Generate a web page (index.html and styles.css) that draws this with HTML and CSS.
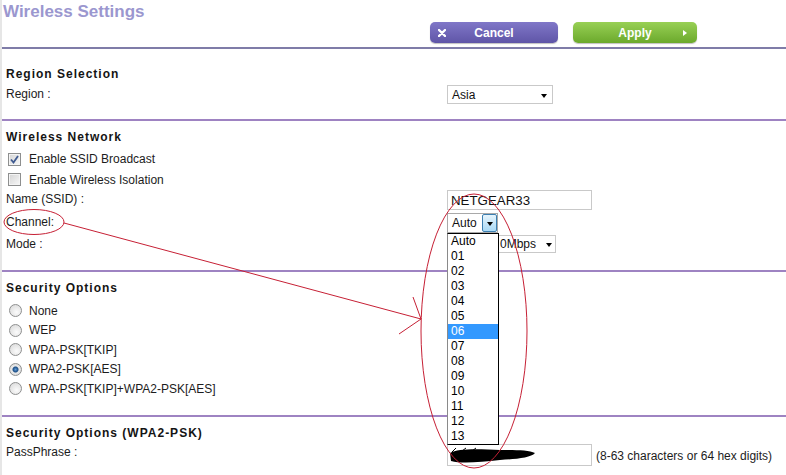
FILE: index.html
```html
<!DOCTYPE html>
<html lang="en">
<head>
    <meta charset="utf-8">
    <title>Wireless Settings</title>
    <link rel="stylesheet" href="styles.css">
</head>
<body>
    <div class="page">
        <header class="topbar">
            <h1 class="title">Wireless Settings</h1>
            <div class="actions">
                <span class="btn btn-cancel">
                    <svg class="btn-x" width="8" height="8" viewBox="0 0 8 8"><path d="M1 1 L7 7 M7 1 L1 7" stroke="#fff" stroke-width="2.4" stroke-linecap="round"/></svg>
                    <span class="btn-text">Cancel</span>
                    <span></span>
                </span>
                <span class="btn btn-apply">
                    <span></span>
                    <span class="btn-text">Apply</span>
                    <span class="btn-arrow"></span>
                </span>
            </div>
        </header>

        <section class="block block-region">
            <h2 class="block-title">Region Selection</h2>
            <div class="field field-region">
                <span class="label">Region :</span>
                <span class="select select-region">Asia<span class="caret"></span></span>
            </div>
        </section>

        <section class="block block-wireless">
            <h2 class="block-title">Wireless Network</h2>
            <div class="check-list">
                <div class="check-row"><span class="checkbox checked"><svg width="9" height="9" viewBox="0 0 9 9"><path d="M1 4.5 L3.5 7.5 L8 1" fill="none" stroke="#3f5a90" stroke-width="1.8"/></svg></span>Enable SSID Broadcast</div>
                <div class="check-row"><span class="checkbox"></span>Enable Wireless Isolation</div>
            </div>
            <div class="field field-name">
                <span class="label">Name (SSID) :</span>
                <span class="textbox">NETGEAR33</span>
            </div>
            <div class="field field-channel">
                <span class="label">Channel:</span>
                <span class="select select-channel">Auto<span class="drop-btn"><span class="caret"></span></span></span>
            </div>
            <div class="field field-mode">
                <span class="label">Mode :</span>
                <span class="select select-mode"><span class="select-value">0Mbps</span><span class="caret"></span></span>
            </div>
        </section>

        <section class="block block-security">
            <h2 class="block-title">Security Options</h2>
            <div class="radio-list">
                <div class="radio-row"><span class="radio"></span>None</div>
                <div class="radio-row"><span class="radio"></span>WEP</div>
                <div class="radio-row"><span class="radio"></span>WPA-PSK[TKIP]</div>
                <div class="radio-row"><span class="radio checked"></span>WPA2-PSK[AES]</div>
                <div class="radio-row"><span class="radio"></span>WPA-PSK[TKIP]+WPA2-PSK[AES]</div>
            </div>
        </section>

        <section class="block block-pass">
            <h2 class="block-title">Security Options (WPA2-PSK)</h2>
            <div class="field field-pass">
                <span class="label">PassPhrase :</span>
                <span class="textbox textbox-pass"></span>
                <span class="hint">(8-63 characters or 64 hex digits)</span>
            </div>
        </section>

        <!-- open channel list -->
        <ul class="dropdown">
            <li>Auto</li>
            <li>01</li>
            <li>02</li>
            <li>03</li>
            <li>04</li>
            <li>05</li>
            <li class="active">06</li>
            <li>07</li>
            <li>08</li>
            <li>09</li>
            <li>10</li>
            <li>11</li>
            <li>12</li>
            <li>13</li>
        </ul>

        <!-- hand drawn marks on the screenshot -->
        <svg class="marks" width="786" height="475" viewBox="0 0 786 475">
            <path d="M450 453 C 458 448, 480 449, 500 450 C 515 450, 529 450, 535 453 C 531 458, 515 459, 500 460 C 480 462, 462 464, 451 461 Z" fill="#000"/>
            <path d="M452 452 L 456 448 M 462 451 L 466 448 M 472 451 L 476 448" stroke="#000" stroke-width="1"/>
            <ellipse cx="34" cy="222" rx="30" ry="12.5" fill="none" stroke="#c62035" stroke-width="1"/>
            <ellipse cx="474" cy="331" rx="53" ry="137" fill="none" stroke="#c62035" stroke-width="1"/>
            <path d="M64 223 L421 319 M413 297 L421 319 L399 334" fill="none" stroke="#c62035" stroke-width="1"/>
        </svg>
    </div>
</body>
</html>
```

FILE: styles.css
```css
body {
    margin: 0;
    font-family: "Liberation Sans", Arial, sans-serif;
    font-size: 12px;
    color: #1c1c1c;
    background: #fff;
}

.page {
    position: relative;
    width: 784px;
    height: 475px;
    border-left: 2px solid #e6e6e6;
    overflow: hidden;
}

/* header */

.topbar {
    display: grid;
    grid-template-columns: 428px auto;
    height: 47px;
    border-bottom: 2px solid #7f7ca8;
}

.title {
    margin: 0;
    padding: 1px 0 0 1px;
    font-size: 17px;
    line-height: 21px;
    font-weight: bold;
    color: #9b97cf;
}

.actions {
    display: flex;
    gap: 15px;
    padding-top: 22px;
}

.btn {
    display: grid;
    grid-template-columns: 1fr auto 1fr;
    align-items: center;
    height: 21px;
    border-radius: 5px;
    color: #fff;
    font-weight: bold;
    font-size: 12px;
    box-shadow: 0 1px 1px rgba(0, 0, 0, 0.25);
}

.btn-cancel {
    width: 128px;
    background: linear-gradient(#8077c8, #5f55a7);
}

.btn-apply {
    width: 124px;
    background: linear-gradient(#98d055, #6ba92c);
}

.btn-x {
    margin-left: 8px;
}

.btn-arrow {
    justify-self: end;
    margin-right: 10px;
    width: 0;
    height: 0;
    border-top: 3px solid transparent;
    border-bottom: 3px solid transparent;
    border-left: 4px solid #fff;
}

/* sections */

.block {
    box-sizing: border-box;
    padding: 6px 0 0 4px;
    border-bottom: 2px solid #9e83c2;
}

.block-region {
    height: 72px;
    padding-top: 15px;
}

.block-wireless {
    height: 151px;
}

.block-security {
    height: 145px;
}

.block-pass {
    border-bottom: 0;
}

.block-title {
    margin: 0;
    font-size: 12px;
    line-height: 20px;
    font-weight: bold;
    letter-spacing: 1px;
    color: #141414;
}

.field {
    display: flex;
    align-items: flex-start;
}

.label {
    width: 441px;
    flex-shrink: 0;
    padding-top: 1px;
    line-height: 18px;
}

.field-region {
    height: 21px;
}

.field-name {
    height: 21px;
}

.field-name .label,
.field-pass .label {
    padding-top: 0;
}

.field-channel {
    height: 22px;
}

.field-channel .label,
.field-mode .label {
    padding-top: 2px;
}

.field-mode {
    height: 21px;
}

.field-pass {
    align-items: center;
}

.field-pass .label {
    align-self: flex-start;
}

/* controls */

.select,
.textbox {
    position: relative;
    box-sizing: border-box;
    display: flex;
    align-items: center;
    border: 1px solid #c9c9c9;
    background: #fff;
    color: #111;
}

.select {
    padding-left: 4px;
}

.select-region {
    width: 106px;
    height: 19px;
    margin-top: 1px;
}

.select-channel {
    width: 51px;
    height: 20px;
    margin-top: 2px;
    border-color: #a9a9a9;
}

.select-mode {
    width: 109px;
    height: 18px;
    margin-top: 2px;
}

/* only the tail of the mode value shows past the open list */
.select-mode .select-value {
    margin-left: 48px;
    white-space: nowrap;
}

.caret {
    position: absolute;
    right: 5px;
    top: 50%;
    margin-top: -1px;
    width: 0;
    height: 0;
    border-top: 4px solid #000;
    border-left: 3.5px solid transparent;
    border-right: 3.5px solid transparent;
}

.select-mode .caret {
    right: 3px;
}

.drop-btn {
    position: absolute;
    right: 0;
    top: 0;
    bottom: 0;
    width: 15px;
    box-sizing: border-box;
    border: 1px solid #3c7fb1;
    border-radius: 2px;
    background: linear-gradient(#e6f4fc, #a9d9f5);
}

.drop-btn .caret {
    right: 3px;
}

.textbox {
    width: 145px;
    height: 20px;
    padding-left: 3px;
    font-size: 13.3px;
}

.textbox-pass {
    height: 22px;
    margin-top: 1px;
}

.hint {
    margin-left: 4px;
    margin-top: 2px;
}

/* checkboxes and radios */

.check-list {
    margin-top: 2px;
}

.check-row,
.radio-row {
    display: flex;
    align-items: center;
    height: 20.5px;
}

.radio-list {
    margin-top: 3px;
}

.radio-row {
    height: 19.5px;
}

.checkbox {
    display: flex;
    align-items: center;
    justify-content: center;
    box-sizing: border-box;
    width: 13px;
    height: 13px;
    margin: 0 8px 0 2px;
    border: 1px solid #8e8f8f;
    background: linear-gradient(135deg, #d4d4d4, #f8f8f8);
    box-shadow: inset 0 0 0 1px #f4f4f4;
}

.radio {
    box-sizing: border-box;
    width: 13px;
    height: 13px;
    margin: 0 7px 0 3px;
    border: 1px solid #8e8f8f;
    border-radius: 50%;
    background: radial-gradient(circle at 60% 65%, #fbfbfb, #d6d6d6);
}

.radio.checked {
    background: radial-gradient(circle, #5f9ad6 0, #1d4f86 2.5px, #e8e8e8 3.5px, #d6d6d6 100%);
}

/* open list */

.dropdown {
    position: absolute;
    left: 445px;
    top: 233px;
    width: 52px;
    margin: 0;
    padding: 0;
    list-style: none;
    border: 1px solid #000;
    border-left-color: #8a8a8a;
    background: #fff;
    box-sizing: border-box;
}

.dropdown li {
    height: 15px;
    line-height: 15px;
    padding-left: 3px;
    color: #000;
}

.dropdown li.active {
    background: #3399ff;
    color: #fff;
}

.marks {
    position: absolute;
    left: -2px;
    top: 0;
    pointer-events: none;
}
```
